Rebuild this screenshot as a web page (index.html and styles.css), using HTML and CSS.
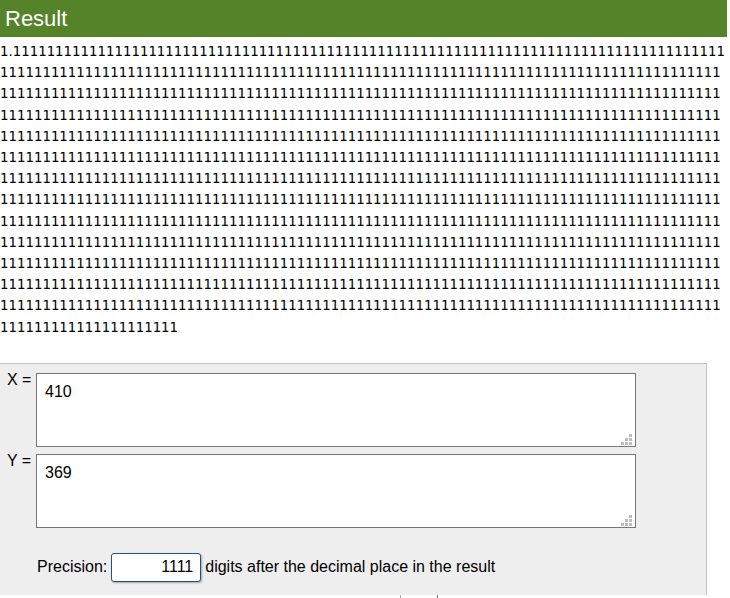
FILE: index.html
```html
<!DOCTYPE html>
<html lang="en">
<head>
    <meta charset="UTF-8">
    <meta name="viewport" content="width=device-width, initial-scale=1.0">
    <title>Big Number Division</title>
    <link rel="stylesheet" href="styles.css">
</head>
<body>
    <div class="page">
        <h2 class="result-title">Result</h2>
        <div class="result" id="result"></div>

        <form class="calc" id="calcForm">
            <label class="var-label" for="x">X =</label>
            <div class="area-wrap">
                <textarea id="x">410</textarea>
                <svg class="grip" width="11" height="11" viewBox="0 0 11 11">
                    <rect x="8" y="0" width="3" height="3"/>
                    <rect x="4" y="4" width="3" height="3"/>
                    <rect x="8" y="4" width="3" height="3"/>
                    <rect x="0" y="8" width="3" height="3"/>
                    <rect x="4" y="8" width="3" height="3"/>
                    <rect x="8" y="8" width="3" height="3"/>
                </svg>
            </div>

            <label class="var-label" for="y">Y =</label>
            <div class="area-wrap">
                <textarea id="y">369</textarea>
                <svg class="grip" width="11" height="11" viewBox="0 0 11 11">
                    <rect x="8" y="0" width="3" height="3"/>
                    <rect x="4" y="4" width="3" height="3"/>
                    <rect x="8" y="4" width="3" height="3"/>
                    <rect x="0" y="8" width="3" height="3"/>
                    <rect x="4" y="8" width="3" height="3"/>
                    <rect x="8" y="8" width="3" height="3"/>
                </svg>
            </div>

            <p class="precision">
                <label for="precision">Precision:</label>
                <input type="text" id="precision" value="1111">
                <span>digits after the decimal place in the result</span>
            </p>
        </form>
        <div class="tab-stub"></div>
    </div>

    <script>
        // long division, digit by digit
        function divide(x, y, digits) {
            let rem = x % y;
            let out = Math.floor(x / y) + '.';
            for (let i = 0; i < digits; i++) {
                rem *= 10;
                out += Math.floor(rem / y);
                rem = rem % y;
            }
            return out;
        }

        document.getElementById('result').textContent = divide(410, 369, 1125);
    </script>
</body>
</html>
```

FILE: styles.css
```css
body {
    margin: 0;
    font-family: "Liberation Sans", Arial, sans-serif;
    font-size: 16px;
    color: #000;
    background: #fff;
}
.page {
    width: 727px;
}
.result-title {
    margin: 0;
    height: 37px;
    line-height: 37px;
    padding-left: 5px;
    font-size: 22px;
    font-weight: normal;
    color: #fff;
    background-color: #54832a;
}
.result {
    padding-top: 4px;
    font-family: "DejaVu Sans", Verdana, sans-serif;
    font-size: 13.333px;
    line-height: 21.2px;
    word-break: break-all;
}
.calc {
    margin: 25px 0 0 0;
    width: 706px;
    padding: 9px 0 13px 0;
    display: grid;
    grid-template-columns: 36px 600px;
    row-gap: 7px;
    background-color: #eeeeee;
    border-top: 1px solid #c3c3c3;
    border-right: 1px solid #c3c3c3;
}
.var-label {
    padding-left: 7px;
    margin-top: -2px;
}
.area-wrap {
    position: relative;
    height: 74px;
}
textarea {
    box-sizing: border-box;
    width: 600px;
    height: 74px;
    margin: 0;
    padding: 9px 8px;
    border: 1px solid #767676;
    font-family: "Liberation Sans", Arial, sans-serif;
    font-size: 16px;
    resize: none;
    display: block;
}
.grip {
    position: absolute;
    right: 4px;
    bottom: 2px;
    fill: #bdbdbd;
}
.precision {
    grid-column: 1 / 3;
    margin: 18px 0 0 0;
    padding-left: 37px;
    display: flex;
    align-items: center;
    gap: 4px;
}
.precision input {
    box-sizing: border-box;
    width: 90px;
    height: 29px;
    margin: 0;
    padding: 0 7px;
    border: 1px solid #24508a;
    border-radius: 3px;
    box-shadow: 1px 1px 2px rgba(0, 0, 0, 0.3);
    font-family: "Liberation Sans", Arial, sans-serif;
    font-size: 16px;
    text-align: right;
}
.tab-stub {
    margin-left: 400px;
    width: 36px;
    height: 4px;
    border-left: 1px solid #aaa;
    border-right: 1px solid #777;
}
```
